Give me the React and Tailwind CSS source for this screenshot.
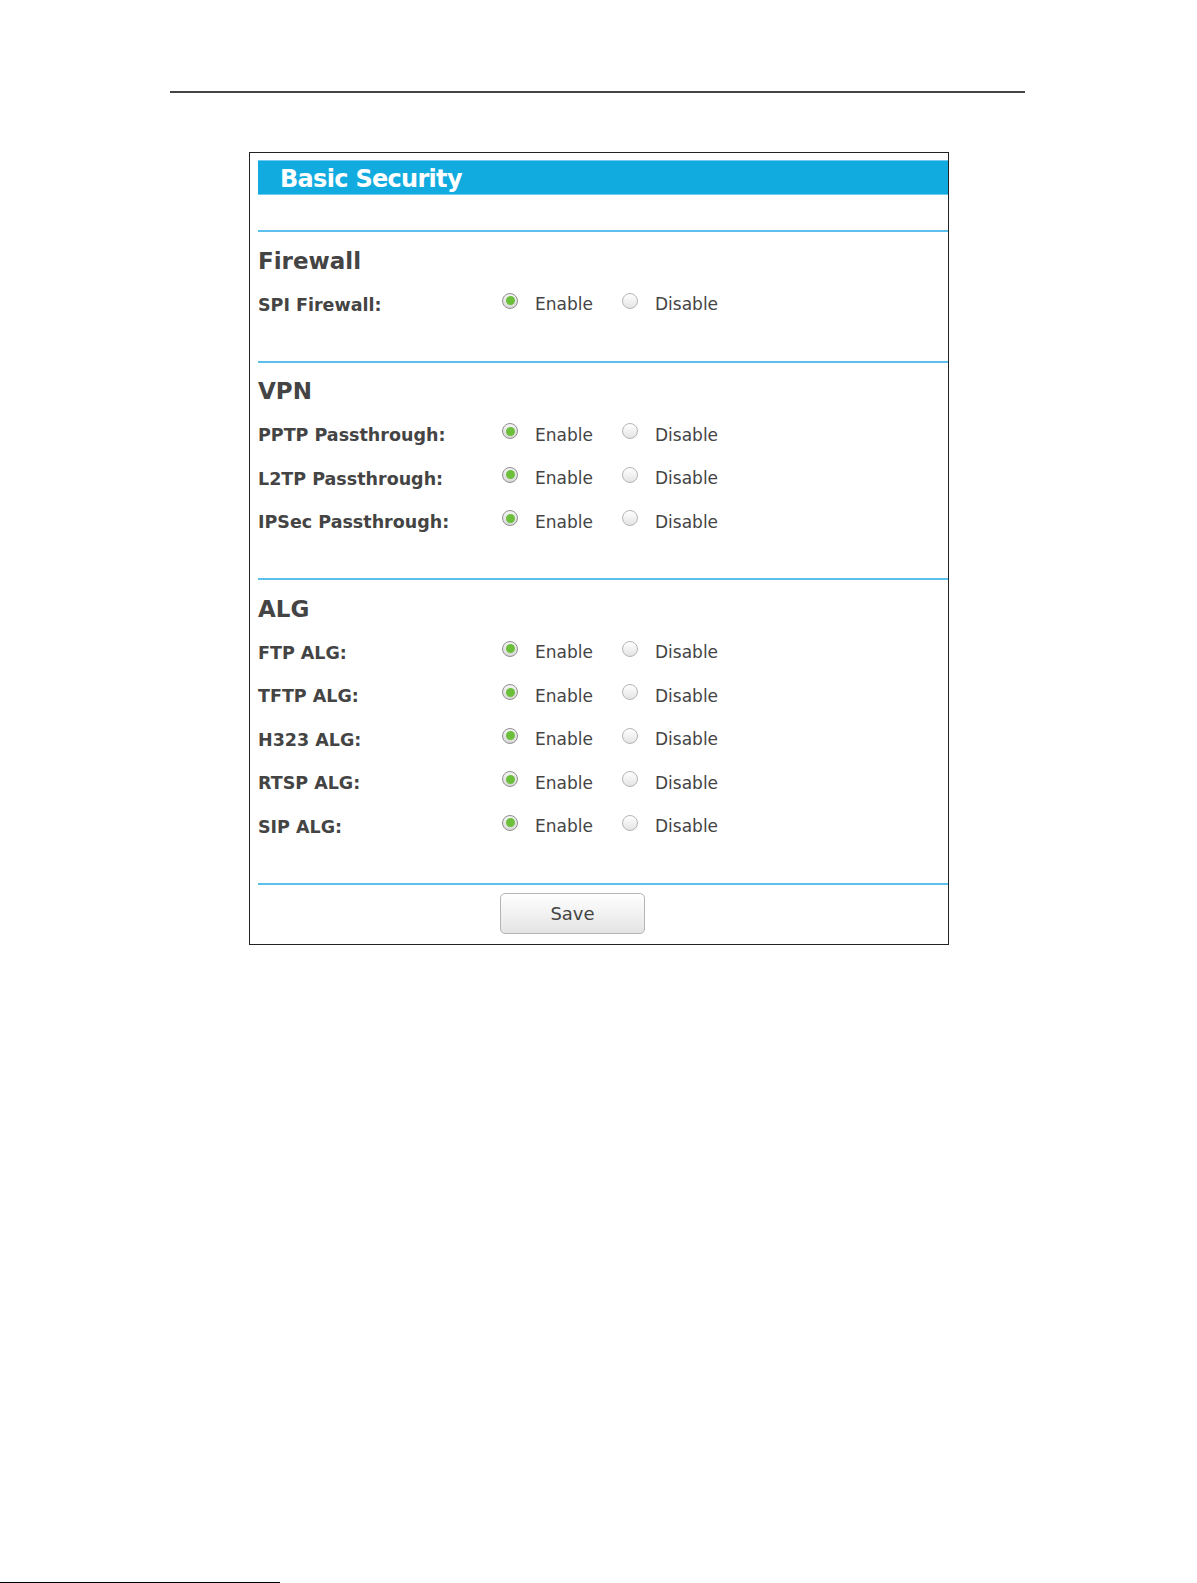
import React from 'react';

const sections = [
  { title: 'Firewall', rows: ['SPI Firewall:'] },
  { title: 'VPN', rows: ['PPTP Passthrough:', 'L2TP Passthrough:', 'IPSec Passthrough:'] },
  { title: 'ALG', rows: ['FTP ALG:', 'TFTP ALG:', 'H323 ALG:', 'RTSP ALG:', 'SIP ALG:'] },
];

const Radio = ({ checked }) => (
  <span
    className={
      'flex items-center justify-center w-[16px] h-[16px] -translate-y-[4px] rounded-full border ' +
      (checked
        ? 'border-[#8f8f8f] bg-gradient-to-b from-[#f4f4f4] to-[#d8d8d8]'
        : 'border-[#b5b5b5] bg-gradient-to-b from-[#ffffff] to-[#e4e4e4]')
    }
  >
    {checked && <span className="w-[9px] h-[9px] rounded-full bg-[#6cbf3a]" />}
  </span>
);

const Row = ({ label }) => (
  <div className="flex items-center h-[43.5px] pt-[2px]">
    <div className="w-[244px] text-[17.5px] font-bold text-[#444]">{label}</div>
    <div className="flex items-center w-[120px]">
      <Radio checked />
      <span className="ml-[17px] text-[17px] text-[#444]">Enable</span>
    </div>
    <div className="flex items-center">
      <Radio />
      <span className="ml-[17px] text-[17px] text-[#444]">Disable</span>
    </div>
  </div>
);

const App = () => {
  return (
    <div
      className="min-h-[1583px] bg-white flex flex-col"
      style={{ fontFamily: '"DejaVu Sans", Verdana, sans-serif' }}
    >
      <div className="ml-[170px] mt-[91px] w-[855px] h-[2px] bg-[#444]" />

      <div className="ml-[249px] mt-[59px] w-[700px] border border-[#222] pt-[7px] pl-[8px] pb-[10px]">
        <div className="h-[35px] bg-[#12abe0] border-y border-[#6fcbef] flex items-center pl-[22px]">
          <span className="text-[24px] font-bold text-white leading-none tracking-[-0.7px] mt-[2px]">
            Basic Security
          </span>
        </div>

        <div className="h-[35px]" />

        {sections.map((s) => (
          <div key={s.title}>
            <div className="h-[2px] bg-[#5cc0ec]" />
            <div className="mt-[14px] h-[30px] flex items-center text-[23px] font-bold text-[#444]">
              {s.title}
            </div>
            <div className="mt-[6px]">
              {s.rows.map((r) => (
                <Row key={r} label={r} />
              ))}
            </div>
            <div className="h-[35px]" />
          </div>
        ))}

        <div className="h-[2px] bg-[#5cc0ec]" />
        <div className="mt-[8px] flex">
          <button className="ml-[242px] w-[145px] h-[41px] rounded-[5px] border border-[#b4b4b4] bg-gradient-to-b from-[#ffffff] to-[#e4e4e4] text-[18px] text-[#444]">
            Save
          </button>
        </div>
      </div>

      <div className="mt-auto flex items-center">
        <div className="w-[280px] h-[1px] bg-black" />
      </div>
    </div>
  );
};

export default App;
